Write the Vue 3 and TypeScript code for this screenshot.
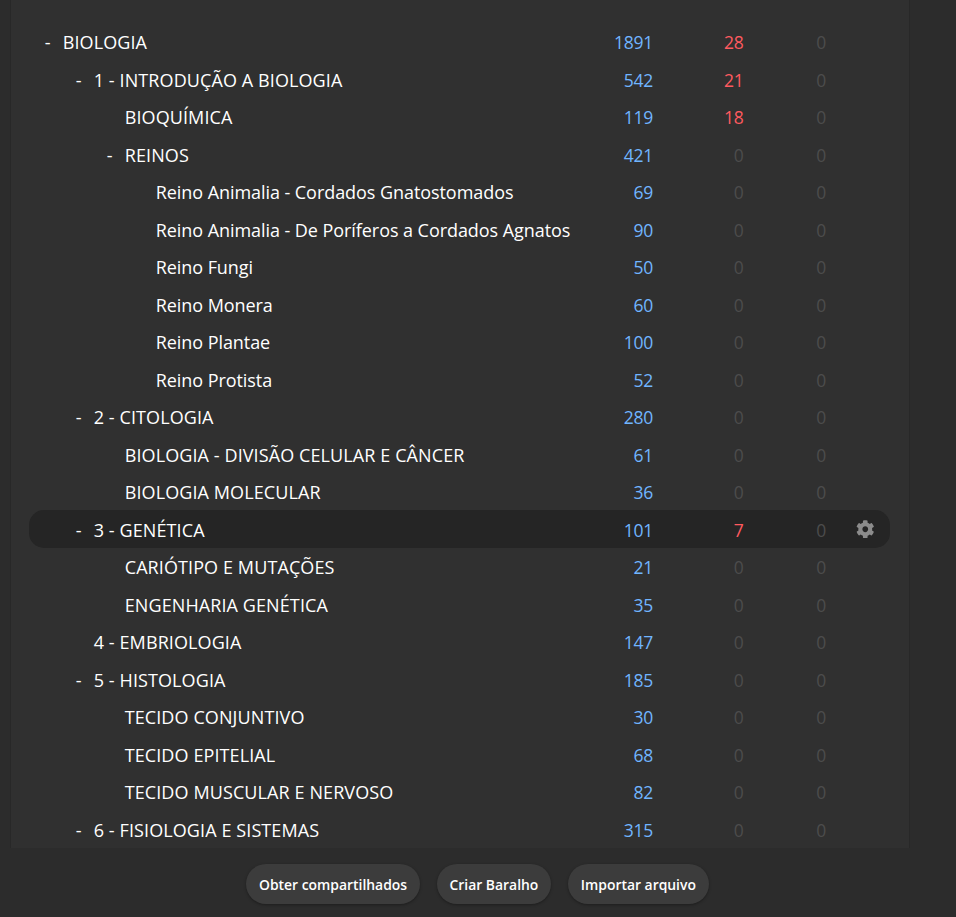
<script setup lang="ts">
interface Row {
  name: string
  level: number
  toggle: boolean
  fresh: number
  due: number
  other: number
  active?: boolean
}

const rows: Row[] = [
  { name: 'BIOLOGIA', level: 0, toggle: true, fresh: 1891, due: 28, other: 0 },
  { name: '1 - INTRODUÇÃO A BIOLOGIA', level: 1, toggle: true, fresh: 542, due: 21, other: 0 },
  { name: 'BIOQUÍMICA', level: 2, toggle: false, fresh: 119, due: 18, other: 0 },
  { name: 'REINOS', level: 2, toggle: true, fresh: 421, due: 0, other: 0 },
  { name: 'Reino Animalia - Cordados Gnatostomados', level: 3, toggle: false, fresh: 69, due: 0, other: 0 },
  { name: 'Reino Animalia - De Poríferos a Cordados Agnatos', level: 3, toggle: false, fresh: 90, due: 0, other: 0 },
  { name: 'Reino Fungi', level: 3, toggle: false, fresh: 50, due: 0, other: 0 },
  { name: 'Reino Monera', level: 3, toggle: false, fresh: 60, due: 0, other: 0 },
  { name: 'Reino Plantae', level: 3, toggle: false, fresh: 100, due: 0, other: 0 },
  { name: 'Reino Protista', level: 3, toggle: false, fresh: 52, due: 0, other: 0 },
  { name: '2 - CITOLOGIA', level: 1, toggle: true, fresh: 280, due: 0, other: 0 },
  { name: 'BIOLOGIA - DIVISÃO CELULAR E CÂNCER', level: 2, toggle: false, fresh: 61, due: 0, other: 0 },
  { name: 'BIOLOGIA MOLECULAR', level: 2, toggle: false, fresh: 36, due: 0, other: 0 },
  { name: '3 - GENÉTICA', level: 1, toggle: true, fresh: 101, due: 7, other: 0, active: true },
  { name: 'CARIÓTIPO E MUTAÇÕES', level: 2, toggle: false, fresh: 21, due: 0, other: 0 },
  { name: 'ENGENHARIA GENÉTICA', level: 2, toggle: false, fresh: 35, due: 0, other: 0 },
  { name: '4 - EMBRIOLOGIA', level: 1, toggle: false, fresh: 147, due: 0, other: 0 },
  { name: '5 - HISTOLOGIA', level: 1, toggle: true, fresh: 185, due: 0, other: 0 },
  { name: 'TECIDO CONJUNTIVO', level: 2, toggle: false, fresh: 30, due: 0, other: 0 },
  { name: 'TECIDO EPITELIAL', level: 2, toggle: false, fresh: 68, due: 0, other: 0 },
  { name: 'TECIDO MUSCULAR E NERVOSO', level: 2, toggle: false, fresh: 82, due: 0, other: 0 },
  { name: '6 - FISIOLOGIA E SISTEMAS', level: 1, toggle: true, fresh: 315, due: 0, other: 0 },
]

const indent = (level: number) => ({ paddingLeft: `${15.7 + level * 31}px` })
const gear =
  'M487.4 315.7l-42.6-24.6c4.3-23.2 4.3-47 0-70.2l42.6-24.6c4.9-2.8 7.1-8.6 5.5-14-11.1-35.6-30-67.8-54.7-94.6-3.8-4.1-10-5.1-14.8-2.3L380.8 110c-17.9-15.4-38.5-27.3-60.8-35.1V25.8c0-5.6-3.9-10.5-9.4-11.7-36.7-8.2-74.3-7.8-109.2 0-5.5 1.2-9.4 6.1-9.4 11.7V75c-22.2 7.9-42.8 19.8-60.8 35.1L88.7 85.5c-4.9-2.8-11-1.9-14.8 2.3-24.7 26.7-43.6 58.9-54.7 94.6-1.7 5.4.6 11.2 5.5 14L67.3 221c-4.3 23.2-4.3 47 0 70.2l-42.6 24.6c-4.9 2.8-7.1 8.6-5.5 14 11.1 35.6 30 67.8 54.7 94.6 3.8 4.1 10 5.1 14.8 2.3l42.6-24.6c17.9 15.4 38.5 27.3 60.8 35.1v49.2c0 5.6 3.9 10.5 9.4 11.7 36.7 8.2 74.3 7.8 109.2 0 5.5-1.2 9.4-6.1 9.4-11.7v-49.2c22.2-7.9 42.8-19.8 60.8-35.1l42.6 24.6c4.9 2.8 11 1.9 14.8-2.3 24.7-26.7 43.6-58.9 54.7-94.6 1.5-5.5-.7-11.3-5.6-14.1zM256 336c-44.1 0-80-35.9-80-80s35.9-80 80-80 80 35.9 80 80-35.9 80-80 80z'
</script>

<template>
  <div class="page">
    <main class="panel">
      <div
        v-for="row in rows"
        :key="row.name"
        class="row"
        :class="{ active: row.active }"
      >
        <div class="name" :style="indent(row.level)">
          <span class="toggle">{{ row.toggle ? '-' : '' }}</span>
          <span class="label" :class="row.level === 3 ? 'lower' : 'caps'">{{ row.name }}</span>
        </div>
        <span class="num fresh">{{ row.fresh }}</span>
        <span class="num due" :class="{ zero: row.due === 0 }">{{ row.due }}</span>
        <span class="num other">{{ row.other }}</span>
        <span class="opts">
          <svg v-if="row.active" class="gear" viewBox="0 0 512 512" aria-hidden="true">
            <path :d="gear" fill="currentColor" />
          </svg>
        </span>
      </div>
    </main>
    <footer class="actions">
      <button class="btn" type="button">Obter compartilhados</button>
      <button class="btn" type="button">Criar Baralho</button>
      <button class="btn" type="button">Importar arquivo</button>
    </footer>
  </div>
</template>

<style>
html,
body {
  margin: 0;
  background: #2c2c2c;
}
</style>

<style scoped>
.page {
  height: 917px;
  width: 956px;
  overflow: hidden;
  display: flex;
  flex-direction: column;
  background: #2c2c2c;
  font-family: "Open Sans", "Noto Sans", sans-serif;
}
.panel {
  box-sizing: border-box;
  width: 900px;
  height: 848px;
  margin-left: 10px;
  padding: 22.9px 19px 0 18px;
  background: #303030;
  border-left: 1px solid #282828;
  border-right: 1px solid #282828;
  overflow: hidden;
}
.row {
  box-sizing: border-box;
  display: grid;
  grid-template-columns: 534px 90px 90.5px 82.5px 64px;
  align-items: center;
  height: 37.5px;
  padding-top: 1px;
  border-radius: 15px;
  color: #fff;
  font-size: 18px;
  white-space: nowrap;
}
.row.active {
  background: #252525;
}
.name {
  display: flex;
  align-items: center;
  min-width: 0;
}
.toggle {
  flex: none;
  width: 18px;
}
.caps {
  letter-spacing: 0.1px;
}
.lower {
  letter-spacing: -0.06px;
}
.num {
  text-align: right;
  font-size: 17.5px;
  letter-spacing: -0.25px;
}
.fresh {
  color: #70b5ff;
}
.due {
  color: #ff5a5f;
}
.due.zero,
.other {
  color: #4c4c4c;
}
.opts {
  display: flex;
  padding-left: 30px;
  margin-top: -1px;
}
.gear {
  display: block;
  width: 18.5px;
  height: 18.5px;
  color: #8c8c8c;
}
.actions {
  flex: 1;
  display: flex;
  align-items: flex-start;
  gap: 16.5px;
  padding: 16px 0 0 246px;
}
.btn {
  height: 40px;
  border: 0;
  border-radius: 20px;
  padding: 0 13px;
  background: #3c3c3c;
  color: #fff;
  font: 600 13.9px "Open Sans", "Noto Sans", sans-serif;
  white-space: nowrap;
  box-shadow: 0 1px 3px rgba(0, 0, 0, 0.35);
}
</style>
